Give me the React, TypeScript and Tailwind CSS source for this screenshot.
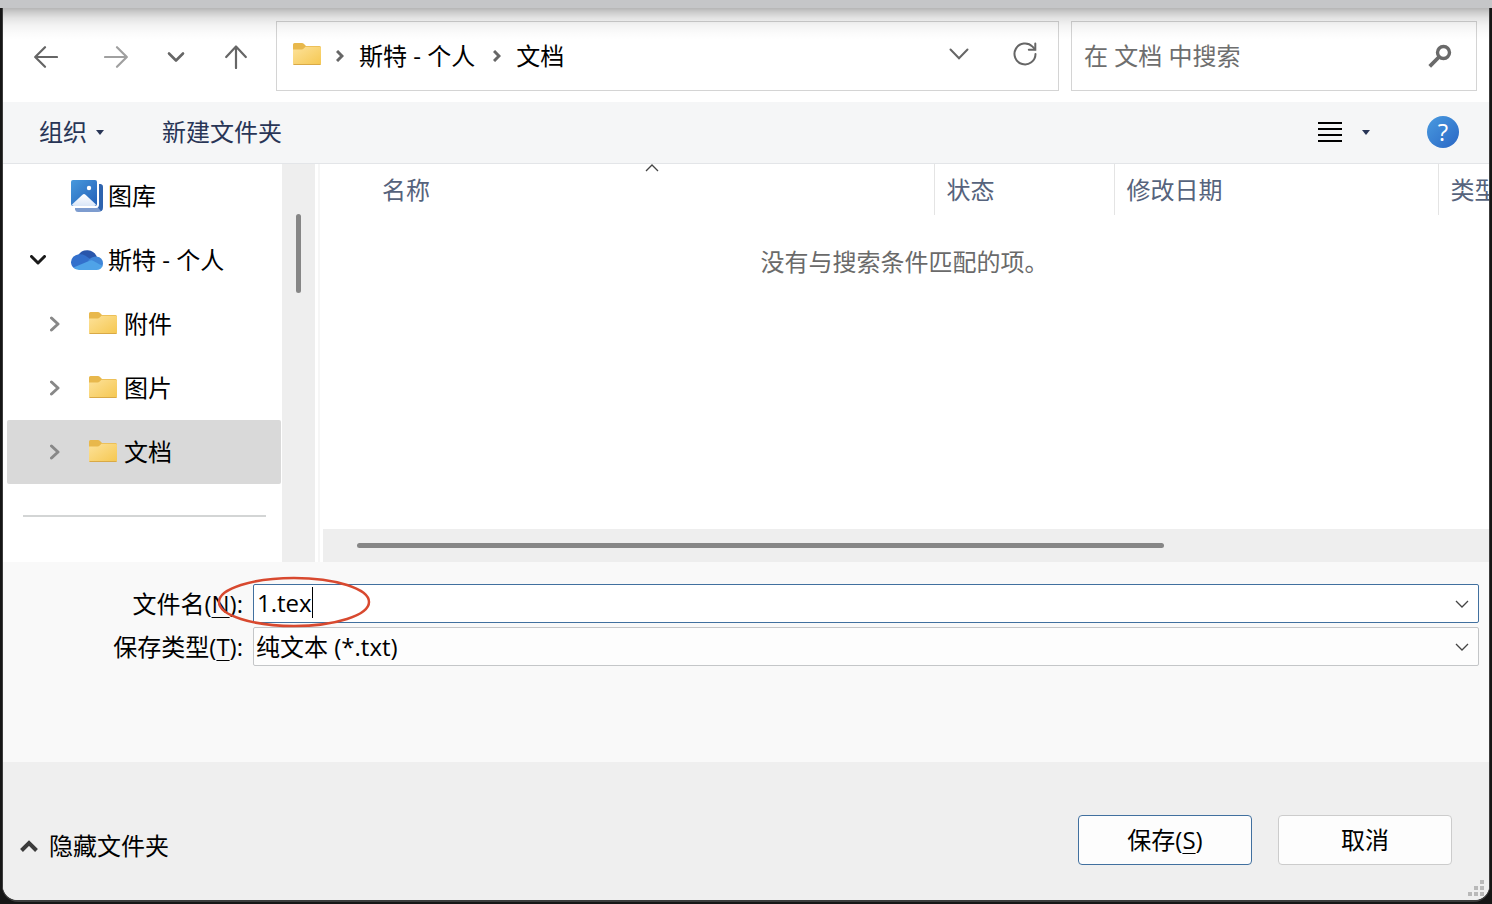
import { useState } from "react";

interface IconProps {
  className?: string;
}

interface TreeItem {
  name: string;
  icon: "gallery" | "cloud" | "folder";
  open?: boolean;
  child?: boolean;
}

const TREE: TreeItem[] = [
  { name: "图库", icon: "gallery" },
  { name: "斯特 - 个人", icon: "cloud", open: true },
  { name: "附件", icon: "folder", child: true },
  { name: "图片", icon: "folder", child: true },
  { name: "文档", icon: "folder", child: true },
];

function FolderIcon({ className }: IconProps) {
  return (
    <svg className={className} width="28" height="22" viewBox="0 0 28 22">
      <defs>
        <linearGradient id="folder" x1="0" y1="0" x2="1" y2="1">
          <stop offset="0" stopColor="#fde29a" />
          <stop offset="1" stopColor="#f5c750" />
        </linearGradient>
      </defs>
      <path d="M0 1.5Q0 0 1.500 0H9q1 0 1.800.8L13 3h13.500Q28 3 28 4.500V12H0z" fill="#e8b84c" />
      <path d="M0 6.500h8.500q1.300 0 2.200-1L12.500 3.700H26.500q1.500 0 1.500 1.300V20.500Q28 22 26.500 22h-25Q0 22 0 20.500z" fill="url(#folder)" />
      <path d="M.5 21.500h27" stroke="#d9a946" strokeWidth="1" />
    </svg>
  );
}

function GalleryIcon({ className }: IconProps) {
  return (
    <svg className={className} width="32" height="32" viewBox="0 0 32 32">
      <defs>
        <linearGradient id="sky" x1="0" y1="0" x2="1" y2="1">
          <stop offset="0" stopColor="#4799dd" />
          <stop offset="1" stopColor="#2260b8" />
        </linearGradient>
        <linearGradient id="hill" x1="0" y1="0" x2="0" y2="1">
          <stop offset="0" stopColor="#ffffff" />
          <stop offset="1" stopColor="#d9e6f8" />
        </linearGradient>
      </defs>
      <path d="M28 4h1.500Q32 4.500 32 7v20q0 5-5 5H7q-2.500 0-3-2.500V28h21q3 0 3-3z" fill="#7d9ccf" />
      <path d="M28 4h1.500Q32 4.500 32 7v20q0 3-2 4.300L27 27.500q1-1 1-2.500z" fill="#2f64ae" />
      <rect width="26" height="26" rx="2" fill="url(#sky)" />
      <path d="M1 24.500 11.500 14.700q1.500-1.300 3 0L25 24.500Q24.500 26 23 26H3q-1.500 0-2-1.500z" fill="url(#hill)" />
      <circle cx="18" cy="8" r="2.200" fill="#fff" />
    </svg>
  );
}

function CloudIcon({ className }: IconProps) {
  return (
    <svg className={className} width="32" height="21" viewBox="0 0 32 21">
      <path d="M7 6.500A10.500 10.500 0 0 1 25.800 7.800L20 12.500 8 10z" fill="#2a56ab" />
      <path d="M8 5.200q3.500-.3 6 1.300L23 12.500 4.500 20A7.500 7.500 0 0 1 0 13Q.5 6.500 8 5.200z" fill="#3370cc" />
      <path d="M17 11.500q3.500-4 8.500-4Q32 8.500 32 14.500l-.5 3z" fill="#3f86d8" />
      <path d="M2.500 18.600 18.500 11.700q2-.8 4 .2l9 5Q30 21 25.500 21H8q-3.500 0-5.500-2.400z" fill="#4fa3e8" />
    </svg>
  );
}

function Caret({ className }: IconProps) {
  return (
    <svg className={className} width="8" height="5" viewBox="0 0 8 5">
      <path d="M0 0h8L4 5z" fill="#283556" />
    </svg>
  );
}

function ChevronRight({ className }: IconProps) {
  return (
    <svg className={className} width="10" height="16" viewBox="0 0 10 16" fill="none" stroke="currentColor" strokeWidth="3" strokeLinecap="round" strokeLinejoin="round">
      <path d="M1.500 2 8 8l-6.500 6" />
    </svg>
  );
}

function PathChevron() {
  return (
    <svg width="8" height="12" viewBox="0 0 8 12" fill="none" stroke="#666" strokeWidth="3">
      <path d="M1 1l5 5-5 5" />
    </svg>
  );
}

function ThinChevron({ className }: IconProps) {
  return (
    <svg className={className} width="14" height="8" viewBox="0 0 14 8" fill="none" stroke="currentColor" strokeWidth="1.300">
      <path d="M1 1l6 6 6-6" />
    </svg>
  );
}

function NavBar() {
  return (
    <div className="relative flex pt-[13px] pr-3 pb-[11px]">
      <div className="flex w-[273px] shrink-0 items-center pt-[2px] pl-[13px] text-[#666]">
        <button aria-label="后退" className="mr-[10px] flex w-[60px] justify-center">
          <svg width="24" height="22" viewBox="0 0 24 22" fill="none" stroke="currentColor" strokeWidth="2.200" strokeLinecap="round" strokeLinejoin="round">
            <path d="M23 11H1.500M11 1.200 1.200 11l9.800 9.800" />
          </svg>
        </button>
        <button aria-label="前进" className="flex w-[60px] justify-center text-[#a0a0a0]">
          <svg width="24" height="22" viewBox="0 0 24 22" fill="none" stroke="currentColor" strokeWidth="2.200" strokeLinecap="round" strokeLinejoin="round">
            <path d="M1 11h21.500M13 1.200l9.800 9.800-9.800 9.800" />
          </svg>
        </button>
        <button aria-label="最近位置" className="flex w-[60px] justify-center">
          <svg width="18" height="12" viewBox="0 0 18 12" fill="none" stroke="currentColor" strokeWidth="2.600" strokeLinecap="round" strokeLinejoin="round">
            <path d="M2 2.500 9 9.500l7-7" />
          </svg>
        </button>
        <button aria-label="上移" className="flex w-[60px] justify-center">
          <svg width="22" height="24" viewBox="0 0 22 24" fill="none" stroke="currentColor" strokeWidth="2.200" strokeLinecap="round" strokeLinejoin="round">
            <path d="M11 23V1.500M1.200 12 11 1.500 20.800 12" />
          </svg>
        </button>
      </div>

      <div className="flex h-[70px] min-w-0 flex-1 items-center border border-[#d4d4d4] pr-[21px] pl-4">
        <FolderIcon className="mb-1 shrink-0" />
        <div className="flex flex-1 items-center pl-[15px] whitespace-nowrap">
          <PathChevron />
          <a href="#personal" className="mr-[18px] ml-[15px]">斯特 - 个人</a>
          <PathChevron />
          <a href="#documents" className="ml-[15px]">文档</a>
        </div>
        <button aria-label="展开路径" className="mr-[44px] mb-1 text-[#666]">
          <svg width="20" height="12" viewBox="0 0 20 12" fill="none" stroke="currentColor" strokeWidth="2" strokeLinecap="round">
            <path d="M1.500 1.500 10 10.300l8.500-8.800" />
          </svg>
        </button>
        <button aria-label="刷新" className="mb-1 text-[#666]">
          <svg width="24" height="24" viewBox="0 0 24 24" fill="none" stroke="currentColor" strokeWidth="2" strokeLinecap="round">
            <path d="M22.500 12A10.500 10.500 0 1 1 19.500 4.600L22 7.200" />
            <path d="M22.300 1.500v6.200h-6.500" />
          </svg>
        </button>
      </div>

      <label className="ml-3 flex h-[70px] w-[406px] shrink-0 items-center border border-[#d4d4d4] pr-6 pl-3">
        <input aria-label="搜索" placeholder="在 文档 中搜索" className="min-w-0 flex-1 outline-none placeholder:text-[#6e6e6e]" />
        <svg width="24" height="24" viewBox="0 0 24 24" fill="none" stroke="#6a6a6a">
          <circle cx="15.500" cy="8.500" r="6" strokeWidth="3.400" />
          <path d="M11 13 1.700 22.300" strokeWidth="3.800" />
        </svg>
      </label>

      {/* shadow cast by the title bar */}
      <div className="pointer-events-none absolute inset-x-0 top-0 h-8 bg-[linear-gradient(to_bottom,#0000004a_0px,#00000034_4px,#0000001c_10px,#0000000d_17px,#00000004_25px,#00000000_32px)]" />
    </div>
  );
}

function Toolbar() {
  return (
    <div className="flex h-[62px] items-center border-b border-[#e3e5e8] bg-[#f5f6f7] pr-[30px] pb-px pl-9 text-[#283556]">
      <button className="flex items-center gap-[9px]">
        组织
        <Caret />
      </button>
      <button className="ml-[58px]">新建文件夹</button>
      <button aria-label="更改视图" className="ml-auto flex items-center gap-5">
        <svg width="24" height="22" viewBox="0 0 24 22" stroke="#000" strokeWidth="2">
          <path d="M0 2h24M0 8h24M0 14h24M0 20h24" />
        </svg>
        <Caret />
      </button>
      <button aria-label="帮助" className="ml-[57px] flex h-8 w-8 items-center justify-center rounded-full bg-linear-to-br from-[#4a9be0] to-[#2a66c4] text-2xl text-white">
        ?
      </button>
    </div>
  );
}

function TreeIcon({ icon }: { icon: TreeItem["icon"] }) {
  if (icon === "gallery") return <GalleryIcon className="mr-[5px] shrink-0" />;
  if (icon === "cloud") return <CloudIcon className="mr-[5px] mb-[2px] shrink-0" />;
  return <FolderIcon className="mr-[7px] mb-[2px] shrink-0" />;
}

function Sidebar({ selected, onSelect }: { selected: string; onSelect: (name: string) => void }) {
  return (
    <nav className="flex w-[312px] shrink-0">
      <div className="flex-1 pl-1">
        <ul>
          {TREE.map((item) => (
            <li key={item.name} className="pr-px">
              <button
                onClick={() => onSelect(item.name)}
                className={`flex h-16 w-full items-center rounded-xs ${selected === item.name ? "bg-[#d9d9d9]" : ""}`}
              >
                <span className={`flex shrink-0 items-center ${item.child ? "w-[82px] pl-[43px]" : "w-16 pl-[23px]"}`}>
                  {item.open && (
                    <svg width="16" height="10" viewBox="0 0 16 10" fill="none" stroke="#1a1a1a" strokeWidth="3" strokeLinecap="round" strokeLinejoin="round">
                      <path d="M1.500 1.500 8 8l6.500-6.500" />
                    </svg>
                  )}
                  {item.child && <ChevronRight className="text-[#888]" />}
                </span>
                <TreeIcon icon={item.icon} />
                {item.name}
              </button>
            </li>
          ))}
        </ul>
        <hr className="mt-[31px] mr-4 ml-4 border-t-2 border-[#d3d5d5]" />
      </div>
      <div className="w-[33px] bg-[#eeeeee] pt-[50px]">
        <div className="ml-[14px] h-[79px] w-[5px] rounded-full bg-[#868686]" />
      </div>
    </nav>
  );
}

function FileList() {
  return (
    <section className="ml-[3px] flex min-w-0 flex-1 flex-col overflow-hidden border-l-2 border-[#f6f6f6]">
      <table className="w-[1320px] shrink-0 table-fixed text-left text-[#56637c]">
        <thead>
          <tr className="h-[51px]">
            <td className="w-[50px]" />
            <th className="relative w-[564px] border-r border-[#e4e4e4] pl-3 font-normal">
              名称
              <ThinChevron className="absolute top-0 left-1/2 -translate-x-1/2 rotate-180 text-[#444]" />
            </th>
            <th className="w-[180px] border-r border-[#e4e4e4] pl-3 font-normal">状态</th>
            <th className="w-[324px] border-r border-[#e4e4e4] pl-3 font-normal">修改日期</th>
            <th className="pl-3 font-normal">类型</th>
          </tr>
        </thead>
      </table>
      <p className="mt-[29px] text-center text-[#6a6a6a]">没有与搜索条件匹配的项。</p>
      <div className="mt-auto ml-[3px] bg-[#eeeeee] py-[14px] pr-[325px] pl-[34px]">
        <div className="h-[5px] rounded-full bg-[#868686]" />
      </div>
    </section>
  );
}

function SaveForm() {
  const [fileName, setFileName] = useState("1.tex");

  return (
    <div className="relative grid h-[200px] grid-cols-[240px_1fr] content-start items-center gap-x-[10px] gap-y-1 bg-[#f9f9f9] pt-[22px] pr-[10px]">
      <label htmlFor="file-name" className="text-right">
        文件名(<span className="underline decoration-1 underline-offset-4">N</span>):
      </label>
      <div className="relative flex h-[39px] items-center rounded-xs border border-[#41709f] bg-white">
        <input
          id="file-name"
          value={fileName}
          onChange={(e) => setFileName(e.target.value)}
          className="min-w-0 flex-1 pb-[2px] pl-[3px] outline-none"
        />
        {fileName === "1.tex" && <span className="absolute top-[2px] left-[58px] h-[31px] w-px bg-black" />}
        <button aria-label="以前的文件名" className="px-[9px] text-[#444]">
          <ThinChevron />
        </button>
      </div>

      <label htmlFor="file-type" className="text-right">
        保存类型(<span className="underline decoration-1 underline-offset-4">T</span>):
      </label>
      <div className="relative h-[39px]">
        <select id="file-type" className="h-full w-full appearance-none rounded-xs border border-[#c4c6c8] bg-[#fdfdfd] pl-[2px]">
          <option>纯文本 (*.txt)</option>
        </select>
        <ThinChevron className="pointer-events-none absolute top-4 right-[10px] text-[#444]" />
      </div>

      {/* hand-drawn mark around the extension */}
      <svg className="pointer-events-none absolute top-[14px] left-[214px]" width="154" height="52" viewBox="0 0 154 52" fill="none">
        <ellipse cx="77" cy="26" rx="75" ry="24" stroke="#d8492f" strokeWidth="2.500" />
      </svg>
    </div>
  );
}

function Footer() {
  return (
    <div className="relative flex items-start bg-[#efefef] pt-[53px] pr-[37px] pb-[35px] pl-[17px]">
      <button className="mt-[13px] flex items-center gap-[11px]">
        <svg width="18" height="12" viewBox="0 0 18 12" fill="none" stroke="#3c3c3c" strokeWidth="4">
          <path d="M1.500 10.500 9 3l7.500 7.500" />
        </svg>
        隐藏文件夹
      </button>
      <div className="ml-auto flex gap-[26px]">
        <button className="h-[50px] w-[174px] rounded border border-[#41709f] bg-[#fdfdfd]">
          保存(<span className="underline decoration-1 underline-offset-4">S</span>)
        </button>
        <button className="h-[50px] w-[174px] rounded border border-[#cccccc] bg-[#fdfdfd]">取消</button>
      </div>
      <svg className="absolute right-[5px] bottom-1" width="16" height="16" viewBox="0 0 16 16" fill="#b9b9b9">
        <path d="M12 0h4v4h-4zM6 6h4v4H6zM12 6h4v4h-4zM0 12h4v4H0zM6 12h4v4H6zM12 12h4v4h-4z" />
      </svg>
    </div>
  );
}

export default function App() {
  const [selected, setSelected] = useState("文档");

  return (
    <div className="flex min-h-screen flex-col bg-[#161616] font-['Open_Sans','Noto_Sans_CJK_SC',sans-serif] text-2xl leading-9 text-black">
      <div className="h-2 bg-[#c5c6c8]" />
      <div className="flex flex-1 flex-col px-0.5 pb-0.5">
        <main className="flex flex-1 flex-col overflow-hidden rounded-b-2xl border-x border-b-2 border-[#3c3c3c] bg-white">
          <NavBar />
          <Toolbar />
          <div className="flex min-h-[398px] flex-1">
            <Sidebar selected={selected} onSelect={setSelected} />
            <FileList />
          </div>
          <SaveForm />
          <Footer />
        </main>
      </div>
    </div>
  );
}
